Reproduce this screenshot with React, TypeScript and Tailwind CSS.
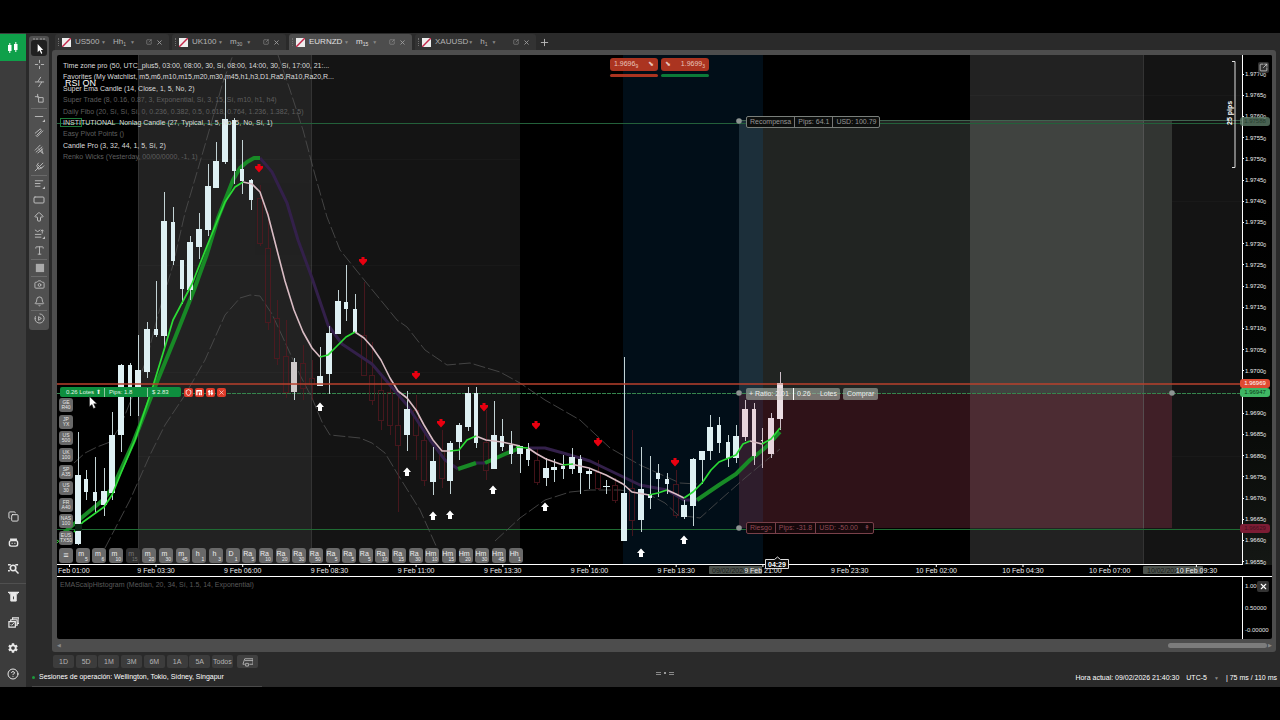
import React from 'react';
import { Copy, Bot, CircleHelp, Bell, Camera, Type, SquareArrowOutUpRight, X, Plus, ArrowBigUp, RectangleHorizontal, Shield } from 'lucide-react';
import { MdSettings } from 'react-icons/md';

type Candle = [x: number, high: number, low: number, top: number, bottom: number, width: number];
type Point = [number, number];

const CANDLES: Candle[] = [
  [78, 432, 545, 475, 544, 6], [86, 470, 500, 479, 492, 4], [95, 457, 514, 492, 501, 4], [104, 468, 516, 491, 505, 6],
  [112, 412, 500, 435, 493, 6], [121, 364, 452, 365, 435, 6], [130, 363, 416, 365, 388, 4], [138, 335, 416, 370, 388, 6],
  [147, 322, 378, 329, 372, 6], [156, 281, 337, 329, 335, 4], [164, 192, 350, 221, 336, 6], [173, 207, 265, 222, 261, 4],
  [182, 260, 304, 260, 289, 4], [190, 236, 300, 242, 290, 6], [199, 213, 259, 229, 247, 6], [208, 164, 236, 186, 230, 6],
  [216, 142, 188, 161, 188, 6], [225, 79, 164, 119, 162, 6], [234, 118, 184, 120, 171, 4], [242, 140, 194, 169, 181, 4],
  [251, 179, 210, 180, 200, 4], [294, 358, 400, 362, 392, 6], [320, 347, 386, 376, 386, 6], [329, 326, 394, 333, 374, 6],
  [338, 290, 334, 301, 334, 6], [346, 265, 321, 302, 309, 4], [355, 294, 333, 309, 332, 4], [407, 391, 451, 409, 435, 6],
  [433, 447, 495, 461, 482, 6], [450, 441, 494, 443, 481, 6], [459, 423, 460, 425, 442, 6], [468, 387, 431, 393, 427, 6],
  [476, 387, 448, 393, 443, 4], [494, 401, 469, 435, 469, 6], [502, 419, 451, 436, 447, 4], [511, 431, 464, 445, 454, 4],
  [520, 446, 473, 446, 454, 6], [528, 443, 466, 449, 460, 4], [546, 458, 486, 468, 478, 6], [554, 459, 482, 467, 470, 6],
  [563, 455, 479, 466, 469, 4], [572, 448, 474, 457, 469, 6], [580, 455, 494, 459, 473, 4], [589, 469, 489, 471, 474, 6],
  [606, 480, 494, 486, 487, 7], [624, 357, 541, 493, 541, 6], [641, 447, 532, 489, 520, 6], [650, 456, 509, 494, 498, 4],
  [658, 464, 497, 473, 479, 4], [667, 473, 494, 479, 484, 4], [684, 500, 519, 505, 517, 6], [693, 458, 526, 459, 506, 6],
  [702, 451, 484, 451, 460, 6], [710, 415, 460, 427, 451, 6], [719, 417, 453, 425, 443, 4], [728, 435, 467, 442, 458, 4],
  [736, 425, 463, 436, 458, 6], [745, 400, 441, 409, 437, 6], [754, 403, 465, 409, 456, 4], [762, 428, 468, 440, 441, 2],
  [771, 413, 458, 418, 454, 6], [780, 372, 430, 383, 419, 6],
];

const BEARISH: Candle[] = [
  [260, 185, 246, 198, 243, 5], [268, 212, 330, 248, 322, 5], [277, 300, 365, 318, 358, 5], [286, 320, 398, 356, 392, 5],
  [303, 345, 400, 363, 388, 5], [312, 360, 400, 378, 384, 5], [364, 282, 376, 335, 375, 5], [372, 342, 405, 375, 400, 5],
  [381, 375, 430, 390, 420, 5], [390, 380, 435, 392, 425, 5], [398, 392, 512, 425, 445, 5], [416, 395, 460, 410, 435, 5],
  [424, 430, 486, 440, 480, 5], [442, 430, 488, 450, 478, 5], [486, 410, 480, 442, 470, 5], [537, 448, 485, 460, 482, 5],
  [598, 460, 490, 472, 488, 5], [615, 478, 503, 485, 500, 5], [632, 430, 536, 488, 520, 5], [676, 470, 518, 484, 515, 5],
];

const PINK: Point[][] = [
  [[243, 182], [252, 184], [260, 192], [268, 215], [277, 250], [285, 281], [294, 310], [303, 332], [312, 348], [320, 357]],
  [[355, 332], [364, 338], [372, 347], [381, 360], [390, 378], [398, 391], [407, 398], [416, 410], [424, 425], [433, 440], [442, 451], [450, 451]],
  [[476, 436], [486, 440], [502, 442], [520, 446]],
  [[528, 448], [537, 454], [546, 459], [563, 465]],
  [[571, 464], [589, 468], [606, 475], [623, 484], [632, 492], [649, 495]],
  [[667, 490], [676, 494], [684, 498]],
  [[750, 441], [762, 444]],
];
const GREEN: Point[][] = [
  [[74, 532], [83, 522], [104, 507], [112, 495], [121, 473], [135, 440], [153, 386], [164, 350], [173, 320], [192, 284], [207, 246], [225, 202], [235, 187], [243, 182]],
  [[320, 357], [328, 355], [337, 346], [346, 337], [355, 332]],
  [[450, 451], [459, 450], [467, 440], [476, 436]],
  [[516, 447], [528, 448]],
  [[563, 465], [573, 464]],
  [[649, 495], [658, 493], [667, 490]],
  [[684, 498], [693, 492], [702, 483], [711, 470], [719, 462], [736, 455], [743, 444], [750, 441]],
  [[762, 444], [771, 439], [780, 428]],
];
const THICK_GREEN: Point[][] = [
  [[60, 536], [80, 519], [103, 500], [113, 487], [133, 443], [157, 382], [175, 338], [194, 290], [207, 254], [218, 218], [233, 180], [240, 168], [247, 162], [254, 158], [260, 158]],
  [[458, 469], [476, 463]],
  [[485, 463], [505, 454], [520, 448]],
  [[697, 500], [719, 485], [736, 474], [750, 460], [765, 448], [780, 432]],
];
const PURPLE: Point[][] = [
  [[260, 158], [272, 172], [287, 203], [298, 240], [312, 278], [328, 325], [342, 344], [372, 364], [390, 385], [407, 405], [430, 440], [445, 460], [458, 469]],
  [[476, 463], [485, 463]],
  [[528, 448], [545, 448], [563, 453], [590, 461], [615, 473], [640, 485], [667, 490], [684, 500], [697, 500]],
];
const BANDS: Point[][] = [
  [[74, 463], [85, 453], [97, 447], [110, 442], [121, 425], [133, 395], [147, 358], [158, 315], [173, 265], [185, 213], [205, 145], [223, 82], [233, 55]],
  [[278, 55], [290, 90], [303, 130], [315, 175], [327, 217], [340, 250], [365, 281], [397, 320], [407, 327], [425, 350], [447, 365], [470, 363], [500, 372], [520, 383], [545, 400], [580, 420], [610, 448], [640, 465], [680, 483], [697, 484]],
  [[105, 548], [130, 500], [150, 455], [165, 425], [185, 395], [205, 360], [225, 315], [240, 298], [250, 295], [260, 296], [272, 314], [284, 340], [300, 375], [312, 398], [322, 422], [330, 435], [360, 438], [372, 443], [385, 453], [400, 478], [420, 510], [437, 548]],
  [[495, 541], [520, 518], [545, 500], [570, 492], [590, 490], [620, 490], [650, 495], [665, 503], [678, 515], [700, 518], [720, 500], [745, 478], [780, 449]],
];
const SELL_MARKS: Point[] = [[259, 168], [363, 261], [416, 375], [441, 423], [484, 407], [536, 425], [598, 442], [675, 462]];
const BUY_MARKS: Point[] = [[320, 407], [407, 472], [433, 516], [450, 515], [493, 490], [545, 507], [641, 553], [684, 540]];

const PRICES = Array.from({ length: 24 }, (_, i) => ((19770 - i * 5) / 10000).toFixed(4));
const TIMES = ['9 Feb 03:30', '9 Feb 06:00', '9 Feb 08:30', '9 Feb 11:00', '9 Feb 13:30', '9 Feb 16:00', '9 Feb 18:30', '9 Feb 21:00', '9 Feb 23:30', '10 Feb 02:00', '10 Feb 04:30', '10 Feb 07:00', '10 Feb 09:30'];

const LEGEND: [string, boolean][] = [
  ['Time zone pro (50, UTC_plus5, 03:00, 08:00, 30, Sí, 08:00, 14:00, 30, Sí, 17:00, 21:...', true],
  ['Favorites (My Watchlist, m5,m6,m10,m15,m20,m30,m45,h1,h3,D1,Ra5,Ra10,Ra20,R...', true],
  ['Super Ema Candle (14, Close, 1, 5, No, 2)', true],
  ['Super Trade (8, 0.16, 0.87, 3, Exponential, Sí, 3, 15, Sí, m10, h1, h4)', false],
  ['Daily Fibo (20, Sí, Sí, Sí, 0, 0.236, 0.382, 0.5, 0.618, 0.764, 1.236, 1.382, 1.5)', false],
  ['INSTITUTIONAL  Nonlag Candle (27, Typical, 1, 5, No, 5, No, Sí, 1)', true],
  ['Easy Pivot Points ()', false],
  ['Candle Pro (3, 32, 44, 1, 5, Sí, 2)', true],
  ['Renko Wicks (Yesterday, 00/00/0000, -1, 1)', false],
];

const FRAMES: [string, string][] = [
  ['m', '5'], ['m', '6'], ['m', '10'], ['m', '15'], ['m', '20'], ['m', '30'], ['m', '45'], ['h', '1'], ['h', '3'], ['D', '1'],
  ['Ra', '5'], ['Ra', '10'], ['Ra', '20'], ['Ra', '30'], ['Ra', '50'], ['Ra', '5'], ['Ra', '5'], ['Ra', '5'], ['Ra', '10'], ['Ra', '15'], ['Ra', '30'],
  ['Hm', '10'], ['Hm', '15'], ['Hm', '20'], ['Hm', '30'], ['Hm', '45'], ['Hh', '1'],
];
const WATCHLIST: [string, string][] = [['GE', 'R40'], ['JP', 'YX'], ['US', '500'], ['UK', '100'], ['SP', 'A35'], ['US', '30'], ['FR', 'A40'], ['NAS', '100'], ['EUS', 'TX50']];

const path = (pts: Point[]) => 'M' + pts.map((p) => p.join(' ')).join(' L');

function Curves({ data, color, width, dash }: { data: Point[][]; color: string; width: number; dash?: string }) {
  return (
    <g fill="none" stroke={color} strokeWidth={width} strokeDasharray={dash} strokeLinejoin="round">
      {data.map((d, i) => <path key={i} d={path(d)} />)}
    </g>
  );
}

function PriceChart() {
  return (
    <svg className="absolute inset-0 h-full w-full" aria-label="EURNZD">
      <g transform="translate(-57 -55)" shapeRendering="crispEdges">
        <rect x="138" y="55" width="173" height="510" fill="#222222" />
        <rect x="311" y="55" width="209" height="510" fill="#141414" />
        <rect x="623" y="55" width="140" height="510" fill="#010e18" />
        <rect x="970" y="55" width="174" height="510" fill="#222222" />
        <rect x="1144" y="55" width="100%" height="510" fill="#141414" />
        <path d="M138.5 55V565M311.5 55V565M1143.5 55V565" stroke="#333" />
        <path d="M138 159H520M138 265H520M138 372H520M138 456H520M970 95H1242M970 201H1242M1172 456H1242" stroke="#fff" strokeOpacity=".025" />
        <rect x="739" y="121" width="24" height="272" fill="#1c2f3a" />
        <rect x="763" y="121" width="207" height="272" fill="#212422" />
        <rect x="970" y="121" width="174" height="272" fill="#404340" />
        <rect x="1144" y="121" width="28" height="272" fill="#323532" />
        <rect x="739" y="393" width="24" height="135" fill="#2e1d2c" />
        <rect x="763" y="393" width="207" height="135" fill="#2f1218" />
        <rect x="970" y="393" width="174" height="135" fill="#4c2c33" />
        <rect x="1144" y="393" width="28" height="135" fill="#401f27" />
        <path d="M1143.5 121V528" stroke="#5a5a5a" strokeOpacity=".7" />
        <path d="M57 123.5H9999" stroke="#23603a" />
        <path d="M739 120.5H9999" stroke="#40634f" />
        <path d="M57 529.5H9999" stroke="#1f6b33" />
        <path d="M57 393.5H9999" stroke="#35854d" strokeDasharray="4 1" />
      </g>
      <g transform="translate(-57 -55)">
        <Curves data={BANDS} color="#505050" width={0.8} dash="12 3" />
        <g fill="none" stroke="#591820" strokeWidth="1" opacity=".75" shapeRendering="crispEdges">
          {BEARISH.map(([x, h, l, t, b, w], i) => (
            <path key={i} d={`M${x} ${h}V${t}M${x} ${b}V${l}M${x - w / 2} ${t}h${w}V${b}h${-w}Z`} />
          ))}
        </g>
        <Curves data={PURPLE} color="#33204a" width={3} />
        <Curves data={THICK_GREEN} color="#188a26" width={4} />
        <g shapeRendering="crispEdges">
          {CANDLES.map(([x, h, l, t, b, w]) => (
            <g key={x}>
              <rect x={x} y={h} width="1" height={l - h} fill={x > 738 ? '#cdbfc8' : '#c3d3d5'} />
              <rect x={x - w / 2} y={t} width={w} height={b - t} fill={x > 738 ? '#e8d5dd' : x === 294 ? '#cfcaca' : '#def0f3'} />
            </g>
          ))}
        </g>
        <Curves data={PINK} color="#d9bcc4" width={1.6} />
        <Curves data={GREEN} color="#2bdc35" width={1.7} />
        <path d="M57 384H9999" stroke="#b8402c" strokeWidth="1.6" />
        {SELL_MARKS.map(([x, y]) => <path key={x} d={`M${x - 1.5} ${y - 4}h3v2h2.5v2l-4 4.500l-4-4.500v-2h2.500Z`} fill="#e80010" />)}
        {BUY_MARKS.map(([x, y]) => <path key={x} d={`M${x} ${y - 4.5}l4 4.500h-2v4h-4v-4h-2Z`} fill="#fff" />)}
        <g fill="#8d9492"><circle cx="739" cy="121" r="2.800" /><circle cx="739" cy="393" r="2.800" /><circle cx="739" cy="528" r="2.800" /><circle cx="1172" cy="393" r="2.800" /></g>
        <rect x="60.500" y="118.500" width="21" height="8" fill="none" stroke="#1e7a3a" />
        <rect x="75" y="524" width="7" height="7" fill="#0b2414" />
        <path d="M57 543l3-3M57 540l4 3" stroke="#28cc32" />
      </g>
    </svg>
  );
}

function Tab({ name, unit, sub, active = false, width }: { name: string; unit: string; sub: string; active?: boolean; width: string }) {
  return (
    <div className={`${width} flex h-[16px] shrink-0 items-center rounded-t-[3px] pr-[6px] pl-[3px] ${active ? 'bg-[#4d4d4d] text-[#e0e0e0]' : 'bg-[#333333] text-[#b4b4b4]'}`}>
      <span className="h-2 w-0 shrink-0 border-l border-dotted border-[#707070]" />
      <svg viewBox="0 0 9 9" className="ml-[3px] h-[9px] w-[9px] shrink-0"><path d="M0 0h9v9h-9z" fill="#eee" /><path d="M0 9L9 0" stroke="#c3284a" strokeWidth="1.500" /></svg>
      <button className="ml-[4px] flex flex-1 items-center justify-between text-[8px] leading-none">{name}<span className="text-[5px] text-[#888]">▼</span></button>
      <button className="ml-[7px] flex w-[33px] shrink-0 items-center text-[8px] leading-none">{unit}<span className="pt-1 text-[5px]">{sub}</span><span className="ml-1 text-[5px] text-[#888]">▼</span></button>
      <button aria-label={`Separar ${name}`} className="shrink-0 text-[#a0a0a0]"><SquareArrowOutUpRight size={6} /></button>
      <button aria-label={`Cerrar ${name}`} className="ml-1 shrink-0 text-[#a0a0a0]"><X size={7} strokeWidth={3} /></button>
    </div>
  );
}

function Glyph({ children }: { children: React.ReactNode }) {
  return <svg viewBox="0 0 12 12" className="h-[11px] w-[11px]" fill="none" stroke="currentColor" strokeWidth="1">{children}</svg>;
}

const corner = <path d="M12 9v3h-3z" fill="currentColor" stroke="none" />;
const TOOLS: [string, React.ReactNode, boolean][] = [
  ['Cursor', <Glyph><path d="M4 1v9l2-2 2 4 1-1-1.500-3.500H10z" fill="#fff" stroke="none" /></Glyph>, false],
  ['Cruz', <Glyph><path d="M6 1v3.500M6 7.500V11M1 6h3.500M7.500 6H11" /></Glyph>, false],
  ['Rayo', <Glyph><path d="M7.500 1L4 6.500h4.500L5 12M1 6.500h3M8 6.500h3" /></Glyph>, false],
  ['Medir', <Glyph><path d="M4 1v4M1 4h4M5 5h5v5H5zM5 5V4" /></Glyph>, false],
  ['Línea', <Glyph><path d="M1 6h9" />{corner}</Glyph>, true],
  ['Canal', <Glyph><path d="M1 7l6-5 1 2-5 5M4 10l6-6M2 9l2 2" /></Glyph>, false],
  ['Abanico', <Glyph><path d="M1 7l6-6M2 9l7-6M4 10l6-5M8 5l2 6M5 5l4 5" /></Glyph>, false],
  ['Tridente', <Glyph><path d="M1 11l9-9M4 4l4 4M5 2L3 5l2 4 4-2M8 8l3-3" /></Glyph>, false],
  ['Fibonacci', <Glyph><path d="M1 3h9M1 6h6M1 9h6" />{corner}</Glyph>, true],
  ['Rectángulo', <RectangleHorizontal size={12} />, false],
  ['Flecha', <ArrowBigUp size={12} />, false],
  ['Riesgo', <Glyph><path d="M1 2l3 2 3-2M9 6V2M7.500 3.500L9 2l1.500 1.500M1 7h7M1 10h7" />{corner}</Glyph>, false],
  ['Texto', <Type size={11} />, false],
  ['Color', <Glyph><path d="M2 2h9v9H2z" fill="#aaa" stroke="none" /></Glyph>, true],
  ['Captura', <Camera size={11} />, true],
  ['Alerta', <Bell size={11} />, false],
  ['Reproducir', <Glyph><path d="M6 1a5 5 0 1 1-4.300 2.500M2 6H1M5 4v4l3-2z" /></Glyph>, true],
];

const NAV: [string, React.ReactNode][] = [
  ['Copiar', <Copy size={11} />],
  ['Algoritmos', <Glyph><rect x="1.500" y="4" width="9" height="6" rx="2" strokeWidth="1.500" /><path d="M3 4V2.500h6V4M4 7h1M7 7h1" strokeWidth="1.500" /></Glyph>],
  ['Analizar', <Glyph><circle cx="5.500" cy="5.500" r="3" strokeWidth="1.800" /><path d="M8 8l3.500 3.500M0 2h3M8 2h3M0 8.500h2" strokeWidth="1.600" /></Glyph>],
  ['Valores', <Glyph><path d="M0 1.500h2v2M12 1.500h-2v2M1 1.500h10" strokeWidth="1.500" /><path d="M3 2h6v9H3z" fill="currentColor" /><path d="M6 6v3" stroke="#3c3c3c" /></Glyph>],
  ['Ventanas', <Glyph><path d="M1 5h7v6H1zM3 5V3h7v6H8M5 3V1h7v6h-2" strokeWidth="1.300" /><path d="M3 8l1 1 3-3" /></Glyph>],
  ['Ajustes', <MdSettings size={12} />],
  ['Ayuda', <CircleHelp size={12} />],
];

function AxisTag({ text, className }: { text: string; className: string }) {
  return <span className={`absolute -left-[3px] flex h-[9px] w-[30px] items-center justify-center rounded-[3px] text-[6px] ${className}`}>{text}</span>;
}

export default function App() {
  return (
    <div className="flex min-h-screen flex-col bg-black py-[33px] font-['Liberation_Sans',Arial,sans-serif] text-[7px] text-[#d6d6d6]">
      <div className="flex flex-1 bg-[#2a2a2a]">
        <nav className="flex w-[26px] shrink-0 flex-col items-center bg-[#3c3c3c]">
          <button aria-label="Operar" className="mt-px flex h-[27px] w-full items-center justify-center bg-[#0fa04a]">
            <svg viewBox="0 0 12 12" className="h-3 w-3" fill="#fff"><path d="M1 3h3.500v6H1zM7 2h3.500v6H7zM2.300 1h1v10h-1zM8.300 0h1v10h-1z" /></svg>
          </button>
          <div className="flex-1" />
          <div className="flex flex-col items-center text-[#e8e8e8]">
            {NAV.map(([label, icon], i) => (
              <button key={label} aria-label={label} className={`flex h-[26px] w-[26px] items-center justify-center ${i === 3 ? 'mt-[2px] border-t border-[#505050]' : ''}`}>{icon}</button>
            ))}
          </div>
        </nav>

        <aside className="mt-[3px] ml-[3px] h-[294px] w-[20px] shrink-0 rounded-[3px] bg-[#505050] pt-[2px] text-[#bdbdbd]">
          <div className="mx-auto w-3 border-t-2 border-dotted border-[#777]" />
          <div className="flex h-[286px] flex-col items-center justify-between">
            {TOOLS.map(([label, icon, line], i) => (
              <button key={label} aria-label={label} className={`flex h-[16px] w-[16px] items-center justify-center ${line ? 'border-t border-[#6a6a6a]' : ''} ${i === 0 ? 'rounded-[3px] bg-[#202020]' : ''}`}>{icon}</button>
            ))}
          </div>
        </aside>

        <main className="ml-[3px] flex min-w-0 flex-1 flex-col">
          <div className="flex h-[17px] items-end gap-[3px] overflow-hidden pl-[3px]">
            <Tab name="US500" unit="Hh" sub="1" width="w-[114px]" />
            <Tab name="UK100" unit="m" sub="30" width="w-[114px]" />
            <Tab name="EURNZD" unit="m" sub="15" active width="w-[123px]" />
            <Tab name="XAUUSD" unit="h" sub="1" width="w-[121px]" />
            <button aria-label="Nueva pestaña" className="flex h-[16px] items-center text-[#bbb]"><Plus size={11} /></button>
          </div>

          <section className="mr-[4px] flex flex-1 flex-col rounded-[3px] bg-[#4d4d4d] pt-[5px] pr-[4px] pl-[5px]">
            <div className="flex flex-1 flex-col overflow-hidden rounded-[2px] bg-black">
              <div className="flex min-h-[510px] flex-1">
                <div className="relative min-w-0 flex-1 overflow-hidden border-b border-white">
                  <PriceChart />
                  <div className="absolute top-[5px] left-[6px] flex h-[102px] flex-col justify-between leading-[11px] whitespace-pre">
                    {LEGEND.map(([text, on]) => <span key={text} className={on ? 'text-[#dcdcdc]' : 'text-[#5f5f5f]'}>{text}</span>)}
                  </div>
                  <span className="absolute top-[23px] left-[8px] text-[9px] leading-[11px] text-white">RSI ON</span>

                  <div className="absolute top-[3px] left-[553px] grid w-[99px] grid-cols-2 gap-x-[3px] gap-y-[3px] text-[#e9c4bb]">
                    <button className="flex h-[13px] items-center justify-between rounded-[3px] bg-[#ab3420] px-1 text-[7px]"><span>1.9696<sub className="text-[5px]">9</sub></span><span>⬊</span></button>
                    <button className="flex h-[13px] items-center justify-between rounded-[3px] bg-[#ab3420] px-1 text-[7px]"><span>⬊</span><span>1.9699<sub className="text-[5px]">3</sub></span></button>
                    <div className="h-[3px] rounded-full bg-[#ab3420]" />
                    <div className="h-[3px] rounded-full bg-[#0b7a38]" />
                  </div>

                  <div className="absolute top-[61px] left-[689px] flex h-[12px] items-center divide-x divide-[#777] rounded-[2px] border border-[#7a7f7b] bg-[#0c0e0d] text-[7px] leading-[10px] text-[#979797]">
                    <span className="px-[3px]">Recompensa</span><span className="px-[3px]">Pips: 64.1</span><span className="px-[3px]">USD: 100.79</span>
                  </div>
                  <div className="absolute top-[333px] left-[689px] flex gap-[3px] text-[7px] leading-[12px] text-[#eee]">
                    <div className="flex h-[12px] w-[94px] rounded-[2px] bg-[#9fa99f]/65">
                      <span className="w-[48px] border-r border-white px-[3px] whitespace-nowrap">+ Ratio: 2.01</span>
                      <span className="flex flex-1 justify-between px-[3px]"><span>0.26</span><span>Lotes</span></span>
                    </div>
                    <button className="h-[12px] rounded-[2px] bg-[#9fa99f]/65 px-[4px]">Comprar</button>
                  </div>
                  <div className="absolute top-[328px] left-[720px] h-[36px] w-[6px] bg-[#eee5e8]/60" />
                  <div className="absolute top-[467px] left-[689px] flex h-[12px] items-center divide-x divide-[#784049] rounded-[2px] border border-[#784049] bg-[#16080b] text-[7px] leading-[10px] text-[#914b57]">
                    <span className="px-[3px]">Riesgo</span><span className="px-[3px]">Pips: -31.8</span><span className="px-[3px]">USD: -50.00 <span className="pl-1">↟</span></span>
                  </div>

                  <svg className="absolute top-[5px] right-0 h-[110px] w-[18px]" aria-hidden="true">
                    <path d="M8 1.500h3v106h-3" fill="none" stroke="#e0e0e0" />
                    <text transform="translate(8 65) rotate(-90)" fill="#fff" fontSize="7" fontWeight="bold">25 pips</text>
                  </svg>

                  <div className="absolute top-[332px] left-[3px] flex h-[10px] w-[121px] items-center rounded-[2px] bg-[#0e8e3e] text-[6px] text-[#e1f3e4]">
                    <span className="w-[45px] border-r border-[#8fc9a0] pl-[6px]">0.26 Lotes ⬆</span><span className="w-[43px] border-r border-[#8fc9a0] pl-1">Pips: 1.8</span><span className="pl-1">$ 2.83</span>
                  </div>
                  <div className="absolute top-[333px] left-[127px] flex gap-[2px] text-white">
                    <button aria-label="Proteger" className="flex h-[9px] w-[9px] items-center justify-center rounded-[2px] bg-[#dd3c2a]"><Shield size={7} strokeWidth={3} /></button>
                    <button aria-label="Duplicar" className="flex h-[9px] w-[9px] items-center justify-center rounded-[2px] bg-[#dd3c2a]"><svg viewBox="0 0 8 8" className="h-[7px] w-[7px]"><path d="M1 7V2h5v5M4 4v3" fill="none" stroke="#fff" strokeWidth="1.500" /></svg></button>
                    <button aria-label="Invertir" className="flex h-[9px] w-[9px] items-center justify-center rounded-[2px] bg-[#dd3c2a]"><svg viewBox="0 0 8 8" className="h-[7px] w-[7px]"><path d="M2.500 1v6M5.500 1v6M1 3h3M4 5h3" fill="none" stroke="#fff" strokeWidth="1.500" /></svg></button>
                    <button aria-label="Cerrar posición" className="flex h-[9px] w-[9px] items-center justify-center rounded-[2px] bg-[#dd3c2a]"><X size={7} /></button>
                  </div>

                  <div className="absolute top-[343px] left-[2px] flex h-[147px] flex-col justify-between">
                    {WATCHLIST.map(([a, b]) => (
                      <button key={a + b} className="flex h-[14px] w-[14px] flex-col items-center justify-center rounded-[3px] bg-[#686868] text-[5px] leading-[5px] text-[#e6e6e6]"><span>{a}</span><span>{b}</span></button>
                    ))}
                  </div>
                  <div className="absolute top-[493px] left-[2px] flex w-[464px] justify-between text-[#eee]">
                    <button aria-label="Menú" className="flex h-[15px] w-[14px] items-center justify-center rounded-[3px] bg-[#696969] text-[9px]">≡</button>
                    {FRAMES.map(([a, b], i) => (
                      <button key={i} className={`relative h-[15px] w-[14px] rounded-[3px] text-[7px] leading-[8px] ${i === 3 ? 'bg-[#303030] text-[#777]' : 'bg-[#696969]'}`}>
                        <span className="block pr-[3px] pb-[4px]">{a}</span><span className="absolute right-[2px] bottom-px text-[5px] leading-[6px]">{b}</span>
                      </button>
                    ))}
                  </div>
                  <svg className="absolute top-[341px] left-[32px] h-[13px] w-[9px]" viewBox="0 0 9 13" aria-hidden="true"><path d="M0.500 0.500v10l2.500-2 1.500 4 2-1-1.800-3.700h3.300z" fill="#fff" stroke="#222" strokeWidth=".5" /></svg>
                </div>

                <div className="relative w-[30px] shrink-0 border-l border-white bg-gradient-to-b from-black to-[#141714] pt-[16px]">
                  <div className="flex h-[494px] flex-col justify-between">
                    {PRICES.map((p) => (
                      <span key={p} className="flex h-[6px] items-center text-[6px] leading-[6px] text-[#f0f0f0]"><span className="mr-px h-px w-px bg-white" />{p}<span className="pt-[2px] text-[5px]">0</span></span>
                    ))}
                  </div>
                  <AxisTag text="1.97588" className="top-[62px] bg-[#5b7a67]/80 text-[#263d2e]" />
                  <AxisTag text="1.96947" className="top-[333px] bg-[#3fb764] text-[#0a3a19]" />
                  <AxisTag text="1.96969" className="top-[324px] bg-[#e04a32] text-white" />
                  <AxisTag text="1.96629" className="top-[469px] bg-[#7c1c34] text-[#41101d]" />
                  <button aria-label="Abrir en ventana" className="absolute top-[7px] right-[3px] flex h-[11px] w-[11px] items-center justify-center rounded-[2px] bg-[#333] text-[#ddd]"><SquareArrowOutUpRight size={9} /></button>
                </div>
              </div>

              <div className="relative h-[12px] border-b border-white">
                <svg className="absolute -top-1 left-0 h-[16px] w-full">
                  <rect x="652" y="5" width="53" height="8" rx="1" fill="#4c524d" />
                  <rect x="1086" y="5" width="60" height="8" rx="1" fill="#4c524d" />
                  <g fontSize="7" fill="#161916"><text x="655" y="11.500">09/02/2026</text><text x="1090" y="11.500">10/02/2026</text></g>
                  <g fontSize="7" fill="#f0f0f0">
                    <text x="1" y="12">Feb 01:00</text>
                    <path d="M12.500 3v3" stroke="#fff" />
                    {TIMES.map((t, i) => (
                      <g key={t}><path d={`M${99 + 86.7 * i} 3v3`} stroke="#fff" /><text x={99 + 86.7 * i} y="12" textAnchor="middle">{t}</text></g>
                    ))}
                  </g>
                </svg>
                <svg className="absolute -top-[9px] left-[707px] h-[14px] w-[26px]"><path d="M1.500 3.500h9l3-2.500 3 2.500h8v9h-23z" fill="#0b0b0b" stroke="#ddd" /><text x="4" y="11" fill="#fff" fontSize="7" fontWeight="bold">04:29</text></svg>
              </div>

              <div className="flex h-[62px]">
                <div className="flex-1 pt-[3px] pl-[3px] text-[7px] leading-[9px] text-[#5a5a5a]">EMAScalpHistogram (Median, 20, 34, Sí, 1.5, 14, Exponential)</div>
                <div className="relative flex w-[30px] flex-col justify-between border-l border-white pt-[4px] pb-[3px] pl-[2px] text-[6px] leading-[11px] text-[#e4e4e4]">
                  <span>1.00</span><span>0.50000</span><span>-0.00000</span>
                  <button aria-label="Cerrar indicador" className="absolute top-[4px] right-[3px] flex h-[11px] w-[12px] items-center justify-center rounded-[2px] bg-[#333] text-white"><X size={9} strokeWidth={3} /></button>
                </div>
              </div>
            </div>
            <div className="flex h-[13px] items-center justify-between text-[5px] text-[#888]">
              <span>◀</span>
              <span className="flex items-center gap-px"><span className="h-[5px] w-[99px] rounded-full bg-[#7c7c7c]" />▶</span>
            </div>
          </section>

          <div className="flex h-[16px] items-end gap-[4px] pl-px text-[#b4b4b4]">
            <div className="flex w-[180px] justify-between">
              {['1D', '5D', '1M', '3M', '6M', '1A', '5A', 'Todos'].map((r) => (
                <button key={r} className="h-[13px] w-[21px] rounded-[2px] bg-[#3c3c3c] text-[7px] leading-[13px]">{r}</button>
              ))}
            </div>
            <button aria-label="Elegir fecha" className="flex h-[13px] w-[21px] items-center justify-center rounded-[2px] bg-[#404040]"><Glyph><path d="M3 9H1l2-6h9v6H8M3 5h9M4 8h3v3H4z" /></Glyph></button>
          </div>
          <footer className="flex h-[19px] justify-between pr-[3px] text-[7px] leading-[20px] text-white">
            <div className="flex flex-1"><div className="-ml-5 flex w-[230px] items-center gap-[4px] border-b border-[#4a4a4a]"><span className="h-[3px] w-[3px] rounded-full bg-[#1c9a3c]" />Sesiones de operación: Wellington, Tokio, Sídney, Singapur</div></div>
            <div className="flex h-[10px] items-center gap-[3px]"><span className="h-[3px] w-[5px] border-y border-[#888]" /><span className="h-[2px] w-[2px] bg-[#999]" /><span className="h-[3px] w-[5px] border-y border-[#888]" /></div>
            <div className="flex flex-1 items-center justify-end gap-[7px]"><span>Hora actual: 09/02/2026 21:40:30</span><button>UTC-5</button><span className="text-[5px] text-[#888]">▼</span><span>| 75 ms / 110 ms</span></div>
          </footer>
        </main>
      </div>
    </div>
  );
}
